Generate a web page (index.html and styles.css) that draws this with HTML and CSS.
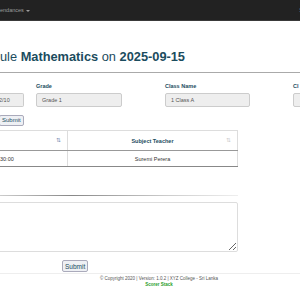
FILE: index.html
```html
<!DOCTYPE html>
<html>
<head>
<meta charset="utf-8">
<link rel="stylesheet" href="styles.css">
</head>
<body>
<nav class="navbar">
  <span class="nav-item">endances <span class="caret"></span></span>
  <span class="nav-right">Se</span>
</nav>
<main class="content">
  <h1 class="title">ule <b>Mathematics</b> on <b>2025-09-15</b></h1>
  <hr class="rule">
  <div class="form-row">
    <div class="field f-date">
      <label>&nbsp;</label>
      <div class="input">2/10</div>
    </div>
    <div class="field f-grade">
      <label>Grade</label>
      <div class="input">Grade 1</div>
    </div>
    <div class="field f-class">
      <label>Class Name</label>
      <div class="input">1 Class A</div>
    </div>
    <div class="field f-cl">
      <label>Cl</label>
      <div class="input"></div>
    </div>
  </div>
  <button class="btn first">Submit</button>
  <table class="grid">
    <thead>
      <tr>
        <th class="c1"><span class="sort on">&#8645;</span></th>
        <th class="c2">Subject Teacher <span class="sort">&#8645;</span></th>
      </tr>
    </thead>
    <tbody>
      <tr>
        <td class="c1">30:00</td>
        <td class="c2 center">Suremi Perera</td>
      </tr>
    </tbody>
  </table>
  <hr class="fade">
  <textarea class="notes"></textarea>
  <div class="submit-row"><button class="btn">Submit</button></div>
</main>
<footer class="footer">
  <div>© Copyright 2020 | Version: 1.0.2 | XYZ College - Sri Lanka</div>
  <div class="brand">Scorer Stack</div>
</footer>
</body>
</html>
```
FILE: styles.css
```css
html, body { margin: 0; padding: 0; }
body {
  width: 300px;
  height: 300px;
  overflow: hidden;
  background: #fff;
  font-family: "Liberation Sans", Arial, sans-serif;
  color: #333;
}
.navbar {
  height: 20px;
  background: #222;
  border-bottom: 1px solid #3a3a3a;
  display: flex;
  align-items: center;
  justify-content: space-between;
  font-size: 5.5px;
  color: #9d9d9d;
}
.caret {
  display: inline-block;
  width: 0; height: 0;
  border-left: 2px solid transparent;
  border-right: 2px solid transparent;
  border-top: 2px solid #9d9d9d;
  vertical-align: middle;
  margin-left: 1px;
}
.nav-right { margin-right: -6px; }
.content { padding: 0; }
.title {
  margin: 27px 0 0 0;
  font-size: 12.8px;
  font-weight: normal;
  color: #1b4c5e;
  line-height: 17px;
}
.title b { font-weight: bold; }
.rule {
  margin: 7px 0 0 0;
  border: 0;
  border-top: 1px solid #aaa;
  height: 0;
}
.form-row {
  display: flex;
  margin-top: 9px;
}
.field { flex-shrink: 0; }
.field label {
  display: block;
  font-size: 5.5px;
  font-weight: bold;
  color: #1b4c5e;
  height: 8px;
  line-height: 8px;
  white-space: nowrap;
}
.input {
  margin-top: 3px;
  height: 14px;
  box-sizing: border-box;
  background: #eee;
  border: 1px solid #ccc;
  border-radius: 2px;
  font-size: 5.5px;
  line-height: 12px;
  padding-left: 5px;
  color: #555;
}
.f-date { width: 25px; margin-left: -1px; margin-right: 12px; }
.f-date .input { padding-left: 0; border-left: 0; border-radius: 0 2px 2px 0; }
.f-grade { width: 86px; margin-right: 43px; }
.f-class { width: 85px; margin-right: 43px; }
.f-cl { width: 60px; }
.btn {
  font-family: "Liberation Sans", Arial, sans-serif;
  font-size: 6px;
  height: 11px;
  padding: 0 2px;
  line-height: 9px;
  background: #eef0f4;
  border: 1px solid #aab;
  border-radius: 2px;
  color: #1b4c5e;
}
.btn.first { display: block; margin-top: 8px; margin-left: -1px; }
.grid {
  margin-top: 4px;
  border-collapse: collapse;
  width: 238px;
  font-size: 5.5px;
}
.grid th {
  height: 19px;
  border-top: 1px solid #ddd;
  border-bottom: 1px solid #999;
  font-weight: bold;
  color: #1b4c5e;
  position: relative;
  padding: 0;
}
.grid td {
  height: 15px;
  padding: 0;
  border-bottom: 1px solid #888;
  color: #333;
}
.grid .c1 { width: 67px; }
.grid .c2 { border-left: 1px solid #ddd; border-right: 1px solid #ddd; text-align: center; }
.sort {
  position: absolute;
  right: 6px;
  top: 5px;
  font-size: 6px;
  color: #ccc;
  font-weight: normal;
}
.sort.on { color: #7b8fb5; }
.fade {
  margin: 28px 0 0 0;
  width: 238px;
  height: 1px;
  border: 0;
  background: linear-gradient(to right, #ccc, #888 30%, #ccc 70%, #eee);
}
.notes {
  display: block;
  margin-top: 6px;
  width: 240px;
  height: 50px;
  box-sizing: border-box;
  border: 1px solid #ddd;
  border-radius: 2px;
  margin-left: -2px;
}
.submit-row { margin-top: 8px; padding-left: 62px; display: flex; }
.submit-row .btn { height: 12px; font-size: 6.5px; }
.footer {
  border-top: 1px solid #eee;
  margin-top: 1px;
  text-align: center;
  font-size: 4.5px;
  color: #555;
  padding-top: 2px;
  line-height: 6px;
  padding-left: 18px;
}
.brand { color: #2a9d2a; font-weight: bold; }
```
